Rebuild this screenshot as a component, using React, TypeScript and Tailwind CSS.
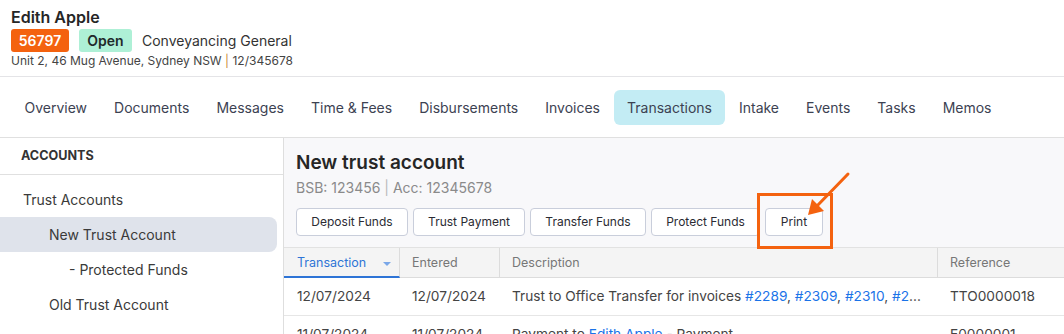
import React from 'react';

const tabs = [
  'Overview',
  'Documents',
  'Messages',
  'Time & Fees',
  'Disbursements',
  'Invoices',
  'Transactions',
  'Intake',
  'Events',
  'Tasks',
  'Memos',
];

const actions = [
  { label: 'Deposit Funds', w: 'w-[112px]' },
  { label: 'Trust Payment', w: 'w-[112px]' },
  { label: 'Transfer Funds', w: 'w-[116px]' },
  { label: 'Protect Funds', w: 'w-[109px]' },
  { label: 'Print', w: 'w-[58px]' },
];

function Header() {
  return (
    <div className="h-[77px] border-b border-[#e4e4e7] pl-[11px] pt-[7px]">
      <div className="text-[16px] leading-[20px] font-semibold text-[#262626]">Edith Apple</div>
      <div className="mt-[2px] flex items-center">
        <span className="h-[23px] w-[58px] rounded-[3px] bg-[#f4620f] text-center text-[14px] leading-[23px] font-semibold text-white">
          56797
        </span>
        <span className="ml-[10px] h-[23px] w-[53px] rounded-[3px] bg-[#aef0d6] text-center text-[14px] leading-[23px] font-semibold text-[#1f2a2a]">
          Open
        </span>
        <span className="ml-[10px] text-[14px] text-[#333]">Conveyancing General</span>
      </div>
      <div className="mt-[1px] text-[12px] leading-[16px] text-[#444]">
        Unit 2, 46 Mug Avenue, Sydney NSW <span className="text-[#c98a3a]">|</span> 12/345678
      </div>
    </div>
  );
}

function Tabs() {
  return (
    <div className="flex h-[61px] items-center border-b border-[#e0e0e0] pl-[11px]">
      {tabs.map((t) => (
        <div
          key={t}
          className={
            'h-[35px] rounded-[6px] px-[13.5px] text-[14px] leading-[35px] text-[#3c4252] ' +
            (t === 'Transactions' ? 'bg-[#c3ecf4]' : '')
          }
        >
          {t}
        </div>
      ))}
    </div>
  );
}

function Sidebar() {
  return (
    <div className="w-[284px] shrink-0 border-r border-[#dedede] bg-white">
      <div className="h-[37px] border-b border-[#e0e0e0] pl-[21px] text-[12.6px] leading-[36px] font-bold text-[#333]">
        ACCOUNTS
      </div>
      <div className="pt-[7px] text-[14px] text-[#3a3a3a]">
        <div className="h-[35px] pl-[23px] leading-[35px]">Trust Accounts</div>
        <div className="mr-[6px] h-[35px] rounded-r-[8px] bg-[#dfe3eb] pl-[49px] leading-[35px]">
          New Trust Account
        </div>
        <div className="h-[35px] pl-[69px] leading-[35px]">- Protected Funds</div>
        <div className="h-[35px] pl-[49px] leading-[35px]">Old Trust Account</div>
        <div className="h-[35px] pl-[69px] leading-[35px]">- Protected Funds</div>
      </div>
    </div>
  );
}

function Link({ children }: { children: React.ReactNode }) {
  return <span className="text-[#1a73e8]">{children}</span>;
}

function Table() {
  return (
    <div className="mt-[11px] border-t border-[#e2e2e2] bg-white">
      <div className="flex h-[30px] bg-[#f4f4f4] text-[12.5px] leading-[30px] text-[#777]">
        <div className="relative w-[116px] border-b-2 border-r border-b-[#2e74d6] border-r-[#dcdcdc] pl-[13px] text-[#2e74d6]">
          Transaction
          <span className="absolute right-[8px] top-[14px] h-0 w-0 border-x-[4px] border-t-[4px] border-x-transparent border-t-[#7aa7e8]" />
        </div>
        <div className="w-[100px] border-r border-b border-[#dcdcdc] pl-[12px]">Entered</div>
        <div className="w-[438px] border-r border-b border-[#dcdcdc] pl-[12px]">Description</div>
        <div className="flex-1 border-b border-[#dcdcdc] pl-[12px]">Reference</div>
      </div>
      <div className="flex h-[38px] border-b border-[#e6e6e6] text-[13.7px] leading-[37px] text-[#444]">
        <div className="w-[116px] pl-[13px]">12/07/2024</div>
        <div className="w-[100px] pl-[12px]">12/07/2024</div>
        <div className="w-[438px] overflow-hidden whitespace-nowrap pl-[12px]">
          Trust to Office Transfer for invoices <Link>#2289</Link>, <Link>#2309</Link>, <Link>#2310</Link>,{' '}
          <Link>#2</Link>...
        </div>
        <div className="flex-1 pl-[12px]">TTO0000018</div>
      </div>
      <div className="flex h-[38px] text-[13.7px] leading-[37px] text-[#444]">
        <div className="w-[116px] pl-[13px]">11/07/2024</div>
        <div className="w-[100px] pl-[12px]">11/07/2024</div>
        <div className="w-[438px] overflow-hidden whitespace-nowrap pl-[12px]">
          Payment to <Link>Edith Apple</Link> - Payment
        </div>
        <div className="flex-1 pl-[12px]">E0000001</div>
      </div>
    </div>
  );
}

function Main() {
  return (
    <div className="relative flex-1 bg-[#f8f8fa] pt-[13px]">
      <div className="pl-[12px]">
        <div className="text-[19px] leading-[24px] font-semibold text-[#262626]">New trust account</div>
        <div className="mt-[3px] text-[14px] leading-[20px] text-[#8a8a8a]">
          BSB: 123456 <span className="text-[#b9b9b9]">|</span> Acc: 12345678
        </div>
        <div className="mt-[10px] flex gap-[5px]">
          {actions.map((a) => (
            <button
              key={a.label}
              className={
                'h-[28px] rounded-[4px] border border-[#c9cedb] bg-white text-center text-[12px] text-[#2b2b33] ' + a.w
              }
            >
              {a.label}
            </button>
          ))}
        </div>
      </div>
      <Table />
    </div>
  );
}

export default function App() {
  return (
    <div className="relative h-[334px] w-[1064px] overflow-hidden bg-white font-['Inter',sans-serif]">
      <Header />
      <Tabs />
      <div className="flex">
        <Sidebar />
        <Main />
      </div>
      {/* annotation */}
      <div className="pointer-events-none absolute left-[757px] top-[193px] h-[56px] w-[76px] border-[3px] border-[#f4620f]" />
      <svg className="pointer-events-none absolute left-0 top-0" width="1064" height="334">
        <line x1="848" y1="174" x2="816" y2="207" stroke="#f4620f" strokeWidth="3" strokeLinecap="round" />
        <polygon points="808,215 812,199 824,211" fill="#f4620f" />
      </svg>
    </div>
  );
}
